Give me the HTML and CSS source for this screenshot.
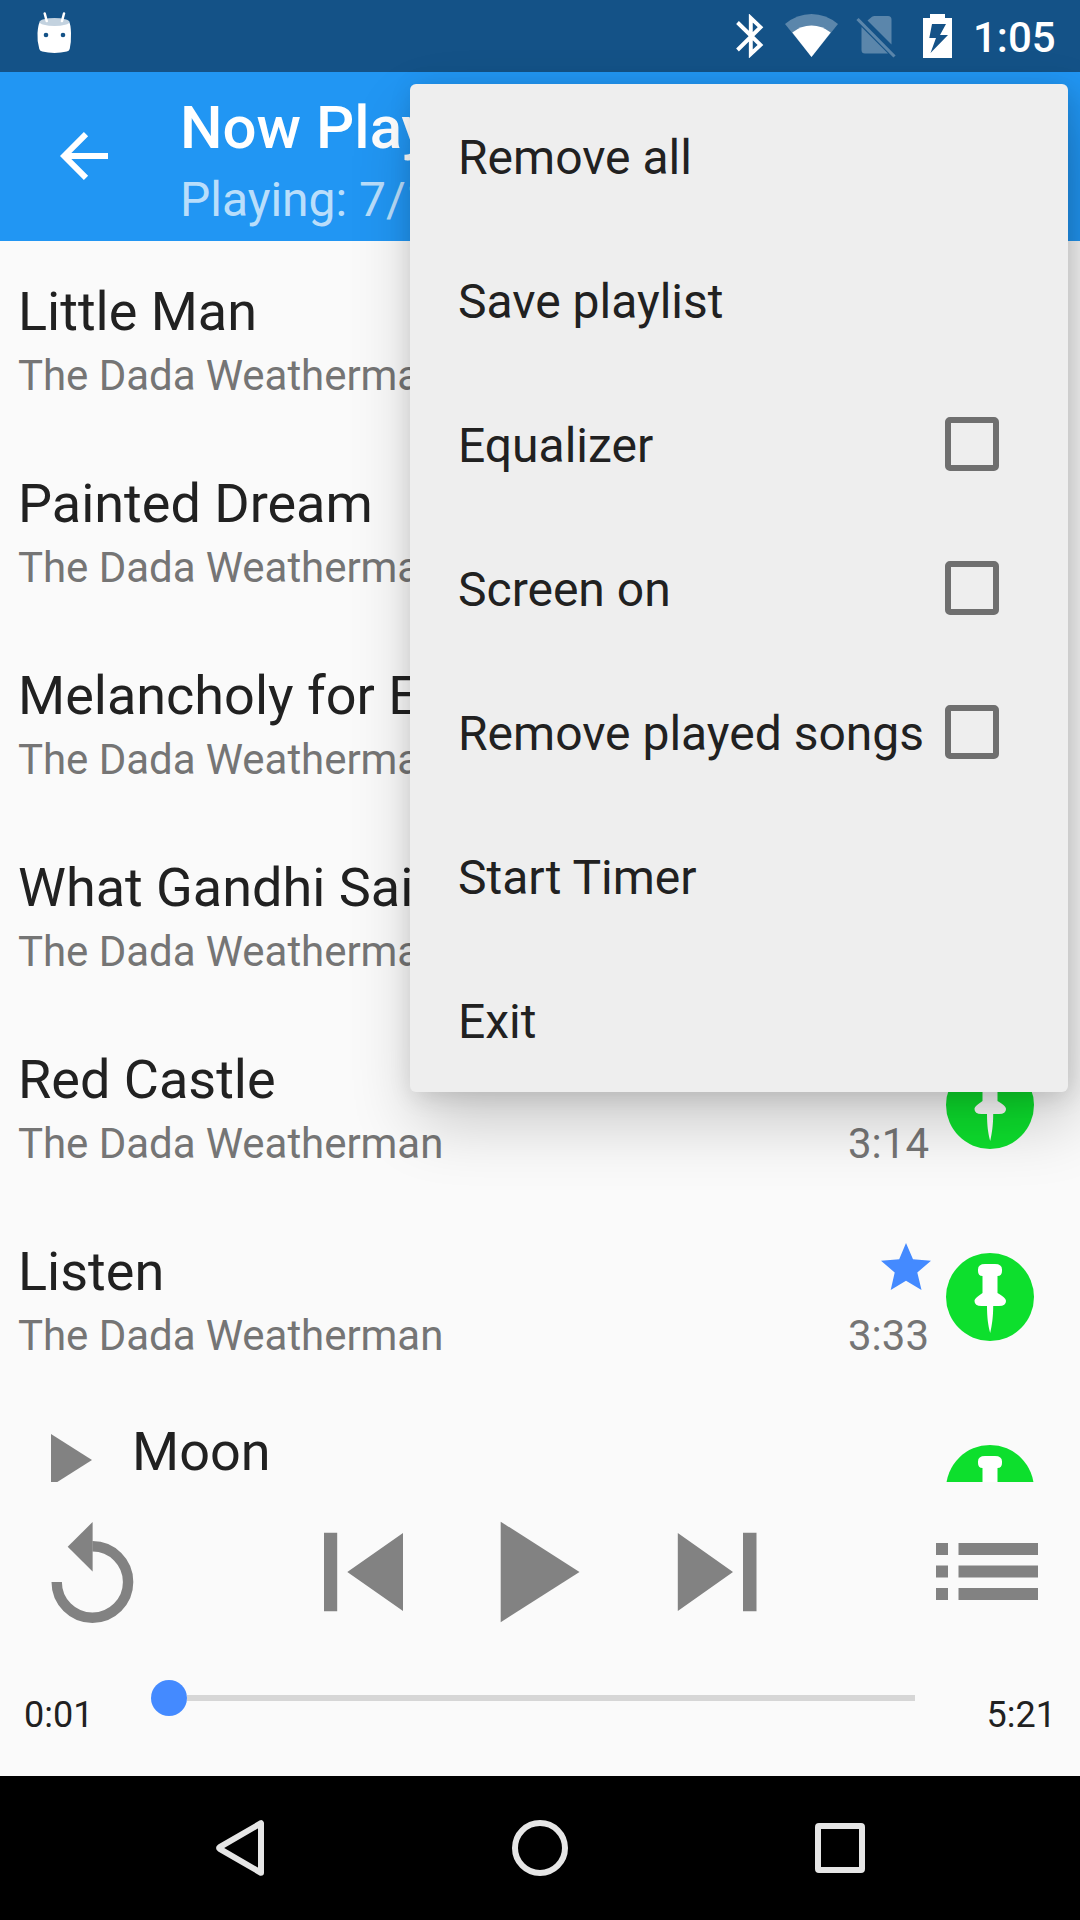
FILE: index.html
```html
<!DOCTYPE html>
<html lang="en">
<head>
<meta charset="utf-8">
<title>Now Playing</title>
<link rel="stylesheet" href="styles.css">
</head>
<body>
<svg class="defs" width="0" height="0">
  <defs>
    <symbol id="pin" viewBox="0 0 88 88">
      <circle cx="44" cy="44" r="44" fill="#0ddf2d"/>
      <path fill="#fff" d="M39 11h10q7 0 7 5.500v1.500q0 5-4.500 5V40C56 43 60 45 60 48q0 5-7 5H47.200C47.200 64 46 72 44.200 80 42 72 41 64 41 53H35.500q-7 0-7-5C28.500 45 33 43 36.500 40V23Q32 23 32 18V16.500Q32 11 39 11z"/>
    </symbol>
  </defs>
</svg>
<div class="screen">
  <header class="status">
    <svg class="droid" width="36" height="42" viewBox="0 0 36 42">
      <path fill="#fff" d="M3 9.500Q1 13 0.500 21t1.800 16q.7 2 3 2.600Q11 41 17.500 41t12.300-1.400q2.200-.6 2.900-2.600Q34.300 30 34 21T32 9.500Q17 16 3 9.500z"/>
      <ellipse cx="17.500" cy="10" rx="15" ry="4" fill="#c3d2df"/>
      <path stroke="#fff" stroke-width="2.500" stroke-linecap="round" d="M7.700 1.500l2 7.500M27 1.500L25 9"/>
      <circle cx="9" cy="23" r="2.300" fill="#145287"/><circle cx="26" cy="23" r="2.300" fill="#145287"/>
    </svg>
    <div class="tray">
      <svg class="bt" width="28" height="44" viewBox="0 0 28 44"><path fill="none" stroke="#fff" stroke-width="3.900" d="M1.500 8.500L24.500 31 14.800 40V4L24.500 13.200 1.500 36"/></svg>
      <svg class="wifi" width="54" height="44" viewBox="0 0 54 44"><path fill="#5b86ab" d="M0 10Q12 0 26.500 0T53 10L26.500 43z"/><path fill="#fff" d="M7.300 18.500Q16 11.500 26.500 11.500T45.700 18.500L26.500 43z"/></svg>
      <svg class="sim" width="40" height="44" viewBox="0 0 40 44"><path fill="#5b86ab" d="M11.500 6.500L16 2.800q1-.8 2.500-.8H32q3.500 0 3.500 3.500V30.500zM5.500 13V36q0 3.500 3.500 3.500H32z"/><path stroke="#5b86ab" stroke-width="3.200" d="M1.500 5L38.500 42.500"/></svg>
      <svg class="batt" width="29" height="44" viewBox="0 0 29 44"><path fill="#fff" fill-rule="evenodd" d="M7 0H22V4H29V44H0V4H7zM9 10L6.300 24H13L7.500 39 25 21H17L23 10z"/></svg>
      <span class="clock">1:05</span>
    </div>
  </header>
  <div class="appbar">
    <svg class="back" width="48" height="48" viewBox="0 0 48 48"><path fill="none" stroke="#fff" stroke-width="6" d="M26 2.100L4.200 24 26 45.900M4.200 24H48"/></svg>
    <div class="heading"><h1>Now Playing</h1><p>Playing: 7/14</p></div>
  </div>
  <main class="songs">
    <div class="song"><div class="info"><h2>Little Man</h2><p>The Dada Weatherman</p></div></div>
    <div class="song"><div class="info"><h2>Painted Dream</h2><p>The Dada Weatherman</p></div></div>
    <div class="song"><div class="info"><h2>Melancholy for E</h2><p>The Dada Weatherman</p></div></div>
    <div class="song"><div class="info"><h2>What Gandhi Said</h2><p>The Dada Weatherman</p></div></div>
    <div class="song"><div class="info"><h2>Red Castle</h2><p>The Dada Weatherman</p></div>
      <div class="meta"><span>3:14</span></div>
      <svg class="pin" width="88" height="88"><use href="#pin"/></svg></div>
    <div class="song"><div class="info"><h2>Listen</h2><p>The Dada Weatherman</p></div>
      <div class="meta"><svg class="star" width="50" height="47" viewBox="0 0 50 47"><path fill="#448aff" d="M25 0L32 16.300 50 17.800 36.300 29.500 40.500 47 25 37.700 9.700 47 13.700 29.500 0 17.800 18.200 16.300z"/></svg><span>3:33</span></div>
      <svg class="pin" width="88" height="88"><use href="#pin"/></svg></div>
    <div class="song current">
      <svg class="playing" width="42" height="52" viewBox="0 0 42 52"><path fill="#828282" d="M0 0L41 26 0 52z"/></svg>
      <div class="info"><h2>Moon</h2></div>
      <svg class="pin" width="88" height="88"><use href="#pin"/></svg></div>
  </main>
  <section class="player">
    <div class="controls">
      <svg width="84" height="102" viewBox="0 0 84 102"><path fill="none" stroke="#828282" stroke-width="10.400" d="M5.700 61A35.700 35.700 0 1 0 41.400 25.300"/><path fill="#828282" d="M41.600 1V50.500L16.700 25.700z"/></svg>
      <svg class="prev" width="80" height="102" viewBox="0 0 80 102"><path fill="#828282" d="M0 11.700H13.200V90.200H0zM79 12V90L23.300 51z"/></svg>
      <svg class="play" width="80" height="102" viewBox="0 0 80 102"><path fill="#828282" d="M.7 .7L79.500 51 .7 101.200z"/></svg>
      <svg class="next" width="80" height="102" viewBox="0 0 80 102"><path fill="#828282" d="M.8 12V90L56 51zM66 11.700H79.500V90.200H66z"/></svg>
      <svg class="list" width="102" height="58" viewBox="0 0 102 58"><path fill="#828282" d="M0 0H12V12H0zM22.500 0H102V12H22.500zM0 22.500H12V34.500H0zM22.500 22.500H102V34.500H22.500zM0 45H12V57H0zM22.500 45H102V57H22.500z"/></svg>
    </div>
    <div class="seek"><span class="time">0:01</span><div class="track"><i class="thumb"></i><i class="line"></i></div><span class="time end">5:21</span></div>
  </section>
  <nav class="nav">
    <svg width="50" height="58" viewBox="0 0 50 58"><path fill="none" stroke="#e6e6e6" stroke-width="6" stroke-linejoin="round" d="M46 4.200V53.800L4.700 29.900q-1.300-.9 0-1.800z"/></svg>
    <svg width="58" height="58" viewBox="0 0 58 58"><circle cx="29" cy="29" r="25" fill="none" stroke="#e6e6e6" stroke-width="6"/></svg>
    <svg width="50" height="50" viewBox="0 0 50 50"><rect x="3" y="3" width="44" height="44" rx="1" fill="none" stroke="#e6e6e6" stroke-width="6" stroke-linejoin="round"/></svg>
  </nav>
  <div class="menu">
    <div class="option">Remove all</div>
    <div class="option">Save playlist</div>
    <div class="option">Equalizer<i class="box"></i></div>
    <div class="option">Screen on<i class="box"></i></div>
    <div class="option">Remove played songs<i class="box"></i></div>
    <div class="option">Start Timer</div>
    <div class="option">Exit</div>
  </div>
</div>
</body>
</html>
```
FILE: styles.css
```css
* { box-sizing: border-box; }
body, h1, h2, p { margin: 0; font-weight: 400; }
body { font-family: Roboto, "Liberation Sans", sans-serif; color: #212121; }
svg { display: block; flex: none; }
.defs { position: absolute; }
.screen { position: relative; width: 1080px; height: 1920px; overflow: hidden; display: flex; flex-direction: column; background: #fafafa; }

.status { height: 72px; flex: none; background: #145287; display: flex; justify-content: space-between; padding: 12px 0 0 37px; }
.tray { display: flex; align-items: flex-start; width: 344px; color: #fff; padding-top: 2px; }
.wifi { margin-left: 21px; }
.sim { margin-left: 17px; }
.batt { margin-left: 27px; }
.clock { margin-left: 21px; font-size: 42px; font-weight: 500; line-height: 50px; margin-top: -1px; }

.appbar { height: 169px; flex: none; background: #2196f3; color: #fff; display: flex; padding-left: 60px; }
.back { margin-top: 60px; }
.heading { margin-left: 72px; padding-top: 21px; white-space: nowrap; }
.heading h1 { font-size: 60px; line-height: 70px; font-weight: 500; }
.heading p { font-size: 48px; line-height: 56px; margin-top: 9px; color: rgba(255, 255, 255, .7); }

.songs { height: 1241px; flex: none; overflow: hidden; }
.song { height: 192px; display: flex; padding: 0 46px 0 18px; white-space: nowrap; }
.info { flex: 1; padding-top: 39px; }
.info h2 { font-size: 54px; line-height: 64px; }
.info p { font-size: 42px; line-height: 50px; letter-spacing: -.05px; margin-top: 7px; color: #757575; }
.meta { display: flex; flex-direction: column; align-items: flex-end; justify-content: flex-end; padding-bottom: 32px; font-size: 42px; line-height: 50px; color: #757575; }
.meta .star { margin: 0 -1px 21px 0; }
.meta span { padding-right: 1px; }
.pin { margin: 52px 0 0 16px; }
.current .playing { margin: 41px 39px 0 33px; }
.current .info { padding-top: 27px; }

.player { height: 294px; flex: none; }
.controls { height: 180px; display: flex; align-items: center; padding-left: 51px; }
.prev { margin-left: 189px; }
.play { margin-left: 96px; }
.next { margin-left: 97px; }
.list { margin-left: 179px; }
.seek { display: flex; padding: 0 24px; }
.time { width: 127px; padding-top: 32px; font-size: 36px; line-height: 42px; }
.end { flex: 1; text-align: right; }
.track { width: 764px; height: 72px; display: flex; align-items: center; }
.thumb { width: 36px; height: 36px; border-radius: 50%; background: #448aff; }
.line { flex: 1; height: 6px; background: #d6d6d6; }

.nav { height: 144px; flex: none; background: #000; display: flex; align-items: center; justify-content: space-between; padding: 0 215px; }

.menu { position: absolute; left: 410px; top: 84px; width: 658px; border-radius: 6px; background: #eee; box-shadow: 6px 30px 66px rgba(0, 0, 0, .2), 3px 4px 24px rgba(0, 0, 0, .13); }
.option { height: 144px; padding: 3px 69px 0 48px; display: flex; align-items: center; justify-content: space-between; font-size: 48px; white-space: nowrap; }
.box { width: 54px; height: 54px; margin-top: -3px; border: 6px solid #6f6f6f; border-radius: 5px; }
```
